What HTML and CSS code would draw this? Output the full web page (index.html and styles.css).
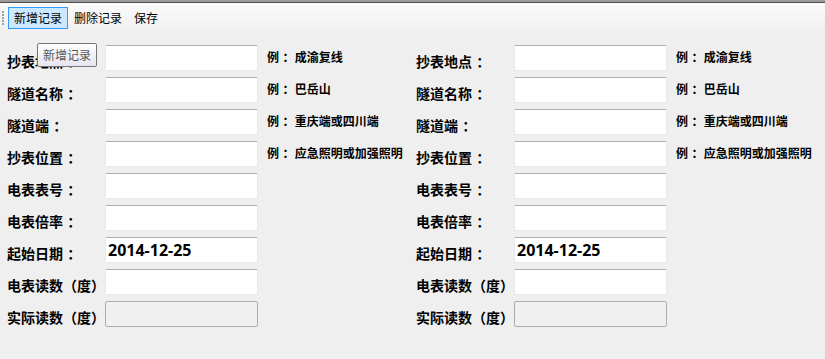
FILE: index.html
```html
<!DOCTYPE html>
<html lang="zh-CN">
<head>
    <meta charset="UTF-8">
    <title>抄表记录</title>
    <link rel="stylesheet" href="styles.css">
</head>
<body>
    <div class="toolbar">
        <span class="grip"></span>
        <button class="tool-btn active">新增记录</button>
        <button class="tool-btn">删除记录</button>
        <button class="tool-btn">保存</button>
    </div>
    <div class="tooltip">新增记录</div>

    <div class="form">
        <div class="group">
            <label class="label">抄表地点<span class="colon">：</span></label>
            <input class="field" type="text">
            <span class="hint">例<span class="colon">：</span>成渝复线</span>

            <label class="label">隧道名称<span class="colon">：</span></label>
            <input class="field" type="text">
            <span class="hint">例<span class="colon">：</span>巴岳山</span>

            <label class="label">隧道端<span class="colon">：</span></label>
            <input class="field" type="text">
            <span class="hint">例<span class="colon">：</span>重庆端或四川端</span>

            <label class="label">抄表位置<span class="colon">：</span></label>
            <input class="field" type="text">
            <span class="hint">例<span class="colon">：</span>应急照明或加强照明</span>

            <label class="label">电表表号<span class="colon">：</span></label>
            <input class="field" type="text">
            <span class="hint"></span>

            <label class="label">电表倍率<span class="colon">：</span></label>
            <input class="field" type="text">
            <span class="hint"></span>

            <label class="label">起始日期<span class="colon">：</span></label>
            <input class="field date" type="text" value="2014-12-25">
            <span class="hint"></span>

            <label class="label">电表读数（度）</label>
            <input class="field" type="text">
            <span class="hint"></span>

            <label class="label">实际读数（度）</label>
            <input class="field" type="text" disabled>
            <span class="hint"></span>
        </div>

        <div class="group">
            <label class="label">抄表地点<span class="colon">：</span></label>
            <input class="field" type="text">
            <span class="hint">例<span class="colon">：</span>成渝复线</span>

            <label class="label">隧道名称<span class="colon">：</span></label>
            <input class="field" type="text">
            <span class="hint">例<span class="colon">：</span>巴岳山</span>

            <label class="label">隧道端<span class="colon">：</span></label>
            <input class="field" type="text">
            <span class="hint">例<span class="colon">：</span>重庆端或四川端</span>

            <label class="label">抄表位置<span class="colon">：</span></label>
            <input class="field" type="text">
            <span class="hint">例<span class="colon">：</span>应急照明或加强照明</span>

            <label class="label">电表表号<span class="colon">：</span></label>
            <input class="field" type="text">
            <span class="hint"></span>

            <label class="label">电表倍率<span class="colon">：</span></label>
            <input class="field" type="text">
            <span class="hint"></span>

            <label class="label">起始日期<span class="colon">：</span></label>
            <input class="field date" type="text" value="2014-12-25">
            <span class="hint"></span>

            <label class="label">电表读数（度）</label>
            <input class="field" type="text">
            <span class="hint"></span>

            <label class="label">实际读数（度）</label>
            <input class="field" type="text" disabled>
            <span class="hint"></span>
        </div>
    </div>
</body>
</html>
```

FILE: styles.css
```css
body {
    margin: 0;
    background-color: #efefef;
    color: #000;
    font-family: "Noto Sans CJK SC", "Noto Sans", sans-serif;
    height: 359px;
    overflow: hidden;
    position: relative;
}
.toolbar {
    display: flex;
    align-items: center;
    height: 27px;
    padding: 2px 0 3px 2px;
    border-top: 2px solid #9a9a9a;
    box-shadow: inset 0 1px 0 #4e4e4e;
    background: linear-gradient(#fbfbfb, #efefef);
}
.grip {
    width: 2px;
    height: 14px;
    margin-right: 4px;
    background: repeating-linear-gradient(#a0a0a0 0 2px, transparent 2px 3px);
}
.tool-btn {
    font-family: inherit;
    font-size: 12px;
    line-height: 20px;
    padding: 0 5px;
    margin: 0;
    border: 1px solid transparent;
    background: none;
    color: #000;
}
.tool-btn.active {
    border-color: #3399ff;
    background-color: #cce8ff;
}
.tooltip {
    position: absolute;
    left: 37px;
    top: 43px;
    padding: 0 5px;
    font-size: 12px;
    line-height: 22px;
    color: #575757;
    border: 1px solid #767676;
    border-radius: 2px;
    background: linear-gradient(#ffffff, #e4e5f0);
}
.form {
    display: flex;
    padding: 11px 0 0 7px;
}
.group {
    width: 409px;
    display: grid;
    grid-template-columns: 98px 153px auto;
    grid-auto-rows: 26px;
    row-gap: 6px;
}
.label {
    font-size: 14px;
    font-weight: bold;
    line-height: 20px;
    padding-top: 6px;
    white-space: nowrap;
}
/* the UI font draws the full-width colon in the middle of its cell */
.colon {
    padding-left: 0.3em;
}
.field {
    box-sizing: border-box;
    width: 153px;
    height: 26px;
    margin: 0;
    padding: 0 2px;
    border: 1px solid #e3e9ef;
    border-top-color: #abadb3;
    border-radius: 2px;
    background: #fff;
    outline: none;
}
.field.date {
    font-family: "Open Sans", sans-serif;
    font-size: 16px;
    font-weight: bold;
    color: #000;
}
.field:disabled {
    background: #f0f0f0;
    border-color: #adadad;
}
.hint {
    font-size: 12px;
    font-weight: bold;
    line-height: 16px;
    padding: 4px 0 0 9px;
    white-space: nowrap;
}
```
